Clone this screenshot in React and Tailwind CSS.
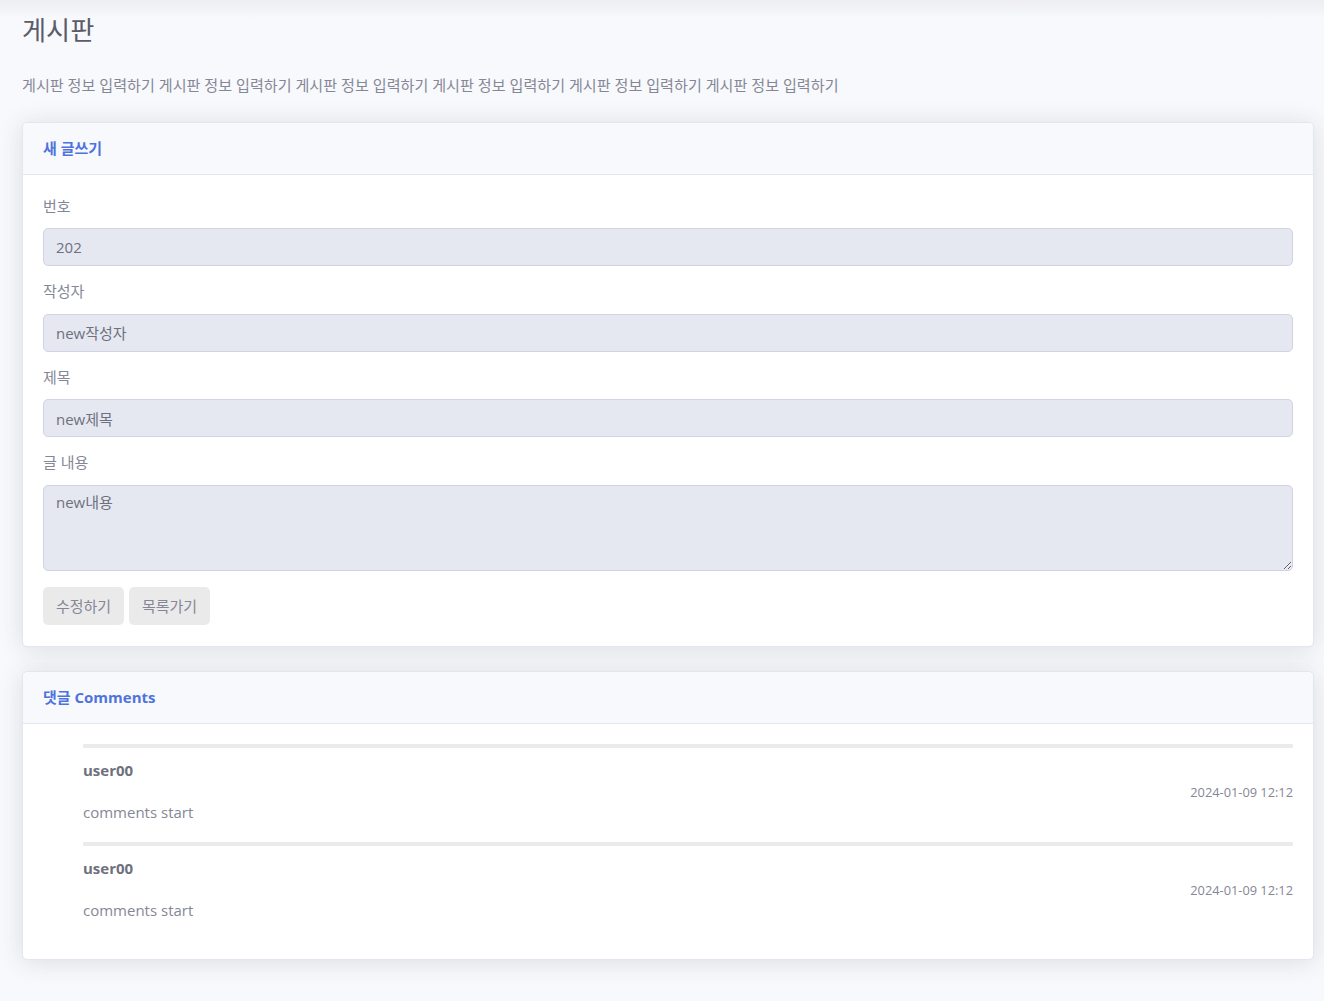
import React from 'react';

const font = { fontFamily: '"Open Sans", "Noto Sans CJK KR", sans-serif' };

const Field = ({ label, value, area }) => (
  <div className="mb-[15px]">
    <label className="block text-[15px] leading-[21.6px] text-[#858796] mb-[11px]">{label}</label>
    {area ? (
      <textarea
        disabled
        defaultValue={value}
        className="block w-full h-[86px] rounded-[5px] border border-[#d1d3e2] bg-[#e6e8f1] px-[12px] py-[6px] text-[15px] leading-[21.6px] text-[#6e707e] resize-y"
      />
    ) : (
      <input
        disabled
        defaultValue={value}
        className="block w-full h-[38px] rounded-[5px] border border-[#d1d3e2] bg-[#e6e8f1] px-[12px] text-[15px] text-[#6e707e]"
      />
    )}
  </div>
);

const Comment = ({ user, date, text }) => (
  <li className="list-none">
    <div className="h-[4px] bg-[#ebebeb]" />
    <div className="pt-[12px] text-[15px] leading-[21.6px] font-bold text-[#6e707e]">{user}</div>
    <div className="text-right text-[12.8px] leading-[20px] text-[#858796]">{date}</div>
    <div className="text-[15px] leading-[21.6px] text-[#858796] pb-[19px]">{text}</div>
  </li>
);

export default function App() {
  const intro = Array(6).fill('게시판 정보 입력하기').join(' ');

  return (
    <div style={font} className="min-h-[1001px] bg-[#f8f9fc] bg-gradient-to-b from-[#ededf2] to-[#f8f9fc] bg-[length:100%_18px] bg-no-repeat">
      <div className="pl-[22px] pr-[10px] pt-[15px] pb-[40px]">
        <h1 className="text-[26.2px] leading-[30px] text-[#5a5c69] font-normal">게시판</h1>
        <p className="mt-[30px] mb-[25px] text-[15.1px] leading-[21.6px] text-[#858796]">{intro}</p>

        {/* 글쓰기 카드 */}
        <div className="bg-white border border-[#e3e6f0] rounded-[5px] shadow-[0_2px_25px_0_rgba(58,59,69,0.15)]">
          <div className="h-[52px] flex items-center px-[20px] bg-[#f8f9fc] border-b border-[#e3e6f0] rounded-t-[5px]">
            <h6 className="text-[15px] font-bold text-[#4e73df]">새 글쓰기</h6>
          </div>
          <div className="px-[20px] pt-[21px] pb-[21px]">
            <Field label="번호" value="202" />
            <Field label="작성자" value="new작성자" />
            <Field label="제목" value="new제목" />
            <Field label="글 내용" value="new내용" area />
            <div className="flex gap-[5px] pt-[1px]">
              <button className="h-[38px] w-[81px] rounded-[5px] bg-[#eaeaea] text-[15px] text-[#858796]">수정하기</button>
              <button className="h-[38px] w-[81px] rounded-[5px] bg-[#eaeaea] text-[15px] text-[#858796]">목록가기</button>
            </div>
          </div>
        </div>

        {/* 댓글 카드 */}
        <div className="mt-[24px] bg-white border border-[#e3e6f0] rounded-[5px] shadow-[0_2px_25px_0_rgba(58,59,69,0.15)]">
          <div className="h-[52px] flex items-center px-[20px] bg-[#f8f9fc] border-b border-[#e3e6f0] rounded-t-[5px]">
            <h6 className="text-[15px] font-bold text-[#4e73df]">댓글 Comments</h6>
          </div>
          <div className="px-[20px] pt-[20px] pb-[19px]">
            <ul className="pl-[40px]">
              <Comment user="user00" date="2024-01-09 12:12" text="comments start" />
              <Comment user="user00" date="2024-01-09 12:12" text="comments start" />
            </ul>
          </div>
        </div>
      </div>
    </div>
  );
}
